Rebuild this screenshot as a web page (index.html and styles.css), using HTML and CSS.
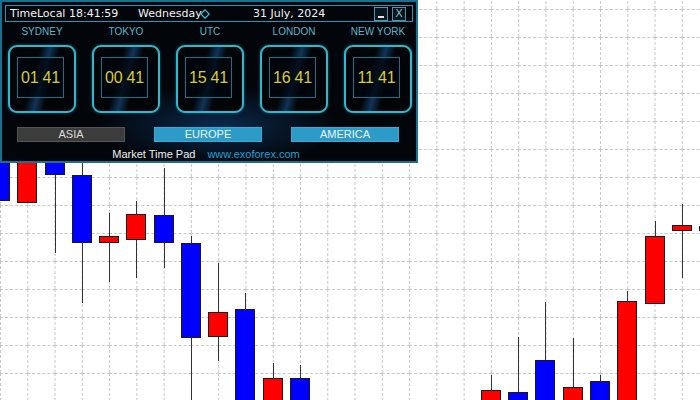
FILE: index.html
```html
<!DOCTYPE html>
<html lang="en">
<head>
  <meta charset="UTF-8" />
  <title>Market Time Pad</title>
  <link rel="stylesheet" href="styles.css">
</head>
<body>
  <svg class="chart" width="700" height="400" viewBox="0 0 700 400">
    <defs>
      <pattern id="grid" x="0" y="9" width="27.2727" height="28" patternUnits="userSpaceOnUse">
        <path d="M0.5 0V28M0 0.5H27.2727" stroke="#c6c6c6" stroke-width="1" stroke-dasharray="3 2" fill="none"/>
      </pattern>
    </defs>
    <rect width="700" height="400" fill="#fff"/>
    <rect width="700" height="400" fill="url(#grid)"/>

    <g class="wicks" stroke="#333" stroke-width="1">
      <line x1="55.5" y1="120" x2="55.5" y2="253"/>
      <line x1="82.5" y1="150" x2="82.5" y2="303"/>
      <line x1="109.5" y1="213" x2="109.5" y2="282"/>
      <line x1="136.5" y1="201" x2="136.5" y2="278"/>
      <line x1="164.5" y1="168" x2="164.5" y2="268"/>
      <line x1="191.5" y1="236" x2="191.5" y2="400"/>
      <line x1="218.5" y1="263" x2="218.5" y2="361"/>
      <line x1="245.5" y1="293" x2="245.5" y2="400"/>
      <line x1="273.5" y1="363" x2="273.5" y2="400"/>
      <line x1="300.5" y1="365" x2="300.5" y2="400"/>
      <line x1="491.5" y1="375" x2="491.5" y2="400"/>
      <line x1="518.5" y1="337" x2="518.5" y2="400"/>
      <line x1="545.5" y1="302" x2="545.5" y2="400"/>
      <line x1="573.5" y1="338" x2="573.5" y2="400"/>
      <line x1="600.5" y1="375" x2="600.5" y2="400"/>
      <line x1="627.5" y1="291" x2="627.5" y2="400"/>
      <line x1="655.5" y1="221" x2="655.5" y2="240"/>
      <line x1="682.5" y1="204" x2="682.5" y2="278"/>
    </g>

    <g class="bodies" stroke="#1a1a1a" stroke-width="1">
      <rect x="-9.5" y="120.5" width="19" height="80" fill="#0000ff"/>
      <rect x="17.5" y="120.5" width="19" height="82" fill="#ff0000"/>
      <rect x="45.5" y="120.5" width="19" height="54" fill="#0000ff"/>
      <rect x="72.5" y="175.5" width="19" height="67" fill="#0000ff"/>
      <rect x="99.5" y="236.5" width="19" height="6" fill="#ff0000"/>
      <rect x="126.5" y="214.5" width="19" height="25" fill="#ff0000"/>
      <rect x="154.5" y="215.5" width="19" height="27" fill="#0000ff"/>
      <rect x="181.5" y="243.5" width="19" height="94" fill="#0000ff"/>
      <rect x="208.5" y="312.5" width="19" height="24" fill="#ff0000"/>
      <rect x="235.5" y="309.5" width="19" height="100" fill="#0000ff"/>
      <rect x="263.5" y="378.5" width="19" height="30" fill="#ff0000"/>
      <rect x="290.5" y="378.5" width="19" height="30" fill="#0000ff"/>
      <rect x="481.5" y="390.5" width="19" height="20" fill="#ff0000"/>
      <rect x="508.5" y="392.5" width="19" height="20" fill="#0000ff"/>
      <rect x="535.5" y="360.5" width="19" height="50" fill="#0000ff"/>
      <rect x="563.5" y="387.5" width="19" height="20" fill="#ff0000"/>
      <rect x="590.5" y="381.5" width="19" height="30" fill="#0000ff"/>
      <rect x="617.5" y="301.5" width="19" height="110" fill="#ff0000"/>
      <rect x="645.5" y="236.5" width="19" height="67" fill="#ff0000"/>
      <rect x="672.5" y="225.5" width="19" height="5" fill="#ff0000"/>
      <rect x="699.5" y="226.5" width="19" height="4" fill="#ff0000"/>
    </g>
  </svg>

  <div class="pad">
    <div class="titlebar">
      <span class="t-time">TimeLocal 18:41:59</span>
      <span class="t-day">Wednesday<svg class="diamond" width="10" height="10" viewBox="0 0 10 10"><polygon points="5,0.8 9.2,5 5,9.2 0.8,5" fill="none" stroke="#37c6dc" stroke-width="1.2"/></svg></span>
      <span class="t-date">31 July, 2024</span>
      <span class="win-btn min"><i></i></span>
      <span class="win-btn close">X</span>
    </div>

    <div class="clocks">
      <div class="clock">
        <div class="city">SYDNEY</div>
        <div class="face"><div class="screen">01 41</div></div>
      </div>
      <div class="clock">
        <div class="city">TOKYO</div>
        <div class="face"><div class="screen">00 41</div></div>
      </div>
      <div class="clock">
        <div class="city">UTC</div>
        <div class="face"><div class="screen">15 41</div></div>
      </div>
      <div class="clock">
        <div class="city">LONDON</div>
        <div class="face"><div class="screen">16 41</div></div>
      </div>
      <div class="clock">
        <div class="city">NEW YORK</div>
        <div class="face"><div class="screen">11 41</div></div>
      </div>
    </div>

    <div class="sessions">
      <div class="session off">ASIA</div>
      <div class="session on">EUROPE</div>
      <div class="session on">AMERICA</div>
    </div>

    <div class="footer">
      <span class="brand">Market Time Pad</span>
      <span class="site">www.exoforex.com</span>
    </div>
  </div>
</body>
</html>
```

FILE: styles.css
```css
html, body {
  margin: 0;
  padding: 0;
  width: 700px;
  height: 400px;
  overflow: hidden;
  background: #fff;
  font-family: "Liberation Sans", Arial, sans-serif;
}

.chart {
  display: block;
}

.pad {
  position: absolute;
  top: 0;
  left: 0;
  width: 418px;
  height: 163px;
  box-sizing: border-box;
  border: 2px solid #17718f;
  background:
    radial-gradient(ellipse 120px 40px at 52% 78%, rgba(18, 70, 130, 0.55), rgba(0, 0, 0, 0) 100%),
    #02060a;
  display: flex;
  flex-direction: column;
}

.titlebar {
  margin: 3px 3px 0 3px;
  height: 17px;
  box-sizing: border-box;
  border: 1px solid #2a93b6;
  display: flex;
  align-items: center;
  color: #f2f2f2;
  font-family: "DejaVu Sans", sans-serif;
  font-size: 11px;
  padding-left: 4px;
}

.t-time {
  width: 128px;
}

.t-day {
  width: 115px;
  display: flex;
  align-items: center;
}

.diamond {
  margin-left: -2px;
}

.t-date {
  flex: 1;
}

.win-btn {
  width: 14px;
  height: 14px;
  box-sizing: border-box;
  border: 1px solid #4f93a8;
  background: #08151c;
  margin-right: 4px;
  position: relative;
}

.win-btn.min i {
  position: absolute;
  left: 3px;
  right: 3px;
  bottom: 2px;
  height: 2px;
  background: #e6e6e6;
}

.win-btn.close {
  margin-right: 6px;
  color: #8fb9c8;
  font-size: 11px;
  line-height: 12px;
  text-align: center;
}

.clocks {
  display: flex;
  gap: 16px;
  padding-left: 6px;
  margin-top: 4px;
}

.clock {
  width: 68px;
  display: flex;
  flex-direction: column;
  align-items: center;
  gap: 7px;
}

.city {
  color: #5bb6cb;
  font-size: 10px;
  line-height: 12px;
  white-space: nowrap;
}

.face {
  width: 68px;
  height: 68px;
  box-sizing: border-box;
  border: 2px solid #33b7cf;
  border-radius: 9px;
  padding: 10px 0 0 7px;
  background:
    linear-gradient(105deg, rgba(0,0,0,0) 38%, rgba(30, 90, 150, 0.55) 50%, rgba(0,0,0,0) 62%),
    #020508;
  box-shadow: 0 0 3px rgba(51, 183, 207, 0.5);
}

.screen {
  width: 47px;
  height: 41px;
  box-sizing: border-box;
  border: 1px solid #1f6e85;
  background: rgba(0, 6, 12, 0.75);
  color: #d8cc34;
  font-size: 16px;
  display: flex;
  align-items: center;
  justify-content: center;
  letter-spacing: -0.2px;
}

.sessions {
  display: flex;
  gap: 29px;
  padding-left: 15px;
  margin-top: 14px;
}

.session {
  width: 108px;
  height: 15px;
  box-sizing: border-box;
  font-size: 11px;
  line-height: 13px;
  text-align: center;
  color: #eef4f6;
}

.session.off {
  background: #3c3c3c;
  border: 1px solid #555;
  color: #dcdcdc;
}

.session.on {
  background: #2c9bc7;
  border: 1px solid #3aa9d4;
}

.footer {
  margin-top: 6px;
  display: flex;
  justify-content: center;
  gap: 12px;
  font-size: 11px;
  line-height: 13px;
  padding-right: 6px;
}

.brand {
  color: #f0f0f0;
}

.site {
  color: #2a9fd0;
}
```
